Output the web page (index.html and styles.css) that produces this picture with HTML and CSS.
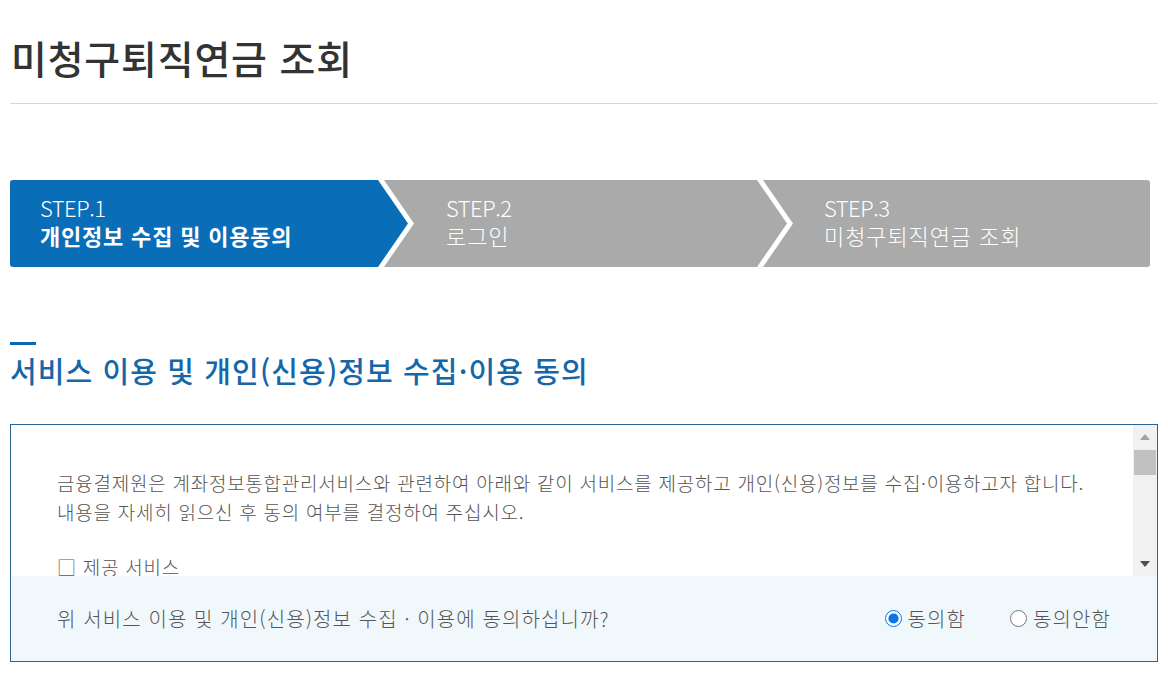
FILE: index.html
```html
<!DOCTYPE html>
<html lang="ko">
<head>
<meta charset="utf-8">
<title>미청구퇴직연금 조회</title>
<link rel="stylesheet" href="styles.css">
</head>
<body>
<div class="page">
  <h1 class="page-title">미청구퇴직연금 조회</h1>

  <ol class="steps">
    <li class="step step-1 is-active">
      <span class="step-text"><span class="step-no">STEP.1</span><strong class="step-name">개인정보 수집 및 이용동의</strong></span>
    </li>
    <li class="step step-2">
      <span class="step-text"><span class="step-no">STEP.2</span><span class="step-name">로그인</span></span>
    </li>
    <li class="step step-3">
      <span class="step-text"><span class="step-no">STEP.3</span><span class="step-name">미청구퇴직연금 조회</span></span>
    </li>
  </ol>

  <h2 class="section-title">서비스 이용 및 개인(신용)정보 수집·이용 동의</h2>

  <div class="terms-box">
    <div class="terms-scroll">
      <div class="terms-content">
        <p>금융결제원은 계좌정보통합관리서비스와 관련하여 아래와 같이 서비스를 제공하고 개인(신용)정보를 수집·이용하고자 합니다.<br>내용을 자세히 읽으신 후 동의 여부를 결정하여 주십시오.</p>
        <p>□ 제공 서비스</p>
        <p>- 미청구퇴직연금 조회 서비스</p>
        <p>□ 수집·이용 목적</p>
      </div>
      <div class="scrollbar" aria-hidden="true">
        <span class="sb-arrow sb-up"></span>
        <span class="sb-track"><span class="sb-thumb"></span></span>
        <span class="sb-arrow sb-down"></span>
      </div>
    </div>
    <div class="agree-row">
      <p class="agree-question">위 서비스 이용 및 개인(신용)정보 수집 · 이용에 동의하십니까?</p>
      <div class="agree-options">
        <label class="agree-option"><input type="radio" name="agree" checked> 동의함</label>
        <label class="agree-option"><input type="radio" name="agree"> 동의안함</label>
      </div>
    </div>
  </div>
</div>
</body>
</html>
```

FILE: styles.css
```css
* { box-sizing: border-box; }
html, body { margin: 0; padding: 0; background: #fff; }
body {
  font-family: "Noto Sans CJK KR", "Noto Sans", sans-serif;
  color: #333;
}
.page { padding: 0 10px; width: 1168px; }

.page-title {
  margin: 0;
  padding: 33px 0 22px 1px;
  font-size: 39px;
  line-height: 48px;
  letter-spacing: 0.8px;
  font-weight: 500;
  color: #333;
  border-bottom: 1px solid #d6d6d6;
}

/* steps */
.steps {
  list-style: none;
  margin: 76px 0 0;
  padding: 0;
  width: 1140px;
  height: 87px;
  display: flex;
  background: #aaaaaa;
  border-radius: 3px;
  overflow: hidden;
}
.step {
  position: relative;
  height: 100%;
  padding-top: 13px;
  color: #fff;
  font-size: 22px;
  line-height: 28px;
}
.step-text { position: relative; z-index: 1; display: flex; flex-direction: column; }
.step-no { font-weight: 300; letter-spacing: -0.5px; }
.step-name { font-weight: 300; letter-spacing: 0.9px; }
.step-1 .step-name { font-weight: 700; letter-spacing: 0.8px; }

.step-1 {
  width: 404px;
  padding-left: 30px;
  background: #fff;
  clip-path: polygon(0 0, 374px 0, 404px 50%, 374px 100%, 0 100%);
}
.step-1::before {
  content: "";
  position: absolute;
  inset: 0;
  background: #0a6db8;
  clip-path: polygon(0 0, 368px 0, 398px 50%, 368px 100%, 0 100%);
}
.step-2 {
  width: 379px;
  padding-left: 32px;
  background: #fff;
  clip-path: polygon(0 0, 349px 0, 379px 50%, 349px 100%, 0 100%);
}
.step-2::before {
  content: "";
  position: absolute;
  inset: 0;
  background: #aaaaaa;
  clip-path: polygon(0 0, 343px 0, 373px 50%, 343px 100%, 0 100%);
}
.step-3 {
  flex: 1;
  padding-left: 31px;
}

/* section title */
.section-title {
  margin: 75px 0 0;
  padding-top: 8px;
  position: relative;
  font-size: 29px;
  line-height: 40px;
  letter-spacing: 1.1px;
  font-weight: 500;
  color: #1567a9;
}
.section-title::before {
  content: "";
  position: absolute;
  left: 0;
  top: 0;
  width: 26px;
  height: 3px;
  background: #0c68b0;
}

/* terms box */
.terms-box {
  margin-top: 34px;
  border: 1px solid #2a6592;
}
.terms-scroll {
  display: flex;
  height: 151px;
}
.terms-content {
  flex: 1;
  overflow: hidden;
  padding: 43px 46px 0;
  font-size: 19px;
  line-height: 29px;
  letter-spacing: 0.75px;
  color: #555;
  font-weight: 300;
}
.terms-content p { margin: 0 0 26px; }

.scrollbar {
  width: 24px;
  background: #f1f1f1;
  display: flex;
  flex-direction: column;
  align-items: stretch;
}
.sb-arrow {
  height: 24px;
  display: flex;
  align-items: center;
  justify-content: center;
}
.sb-arrow::before {
  content: "";
  width: 0; height: 0;
  border-left: 5px solid transparent;
  border-right: 5px solid transparent;
}
.sb-up::before { border-bottom: 6px solid #a3a3a3; }
.sb-down::before { border-top: 6px solid #505050; }
.sb-track { flex: 1; padding: 1px 1px 0; }
.sb-thumb { display: block; height: 25px; background: #c1c1c1; }

.agree-row {
  display: flex;
  align-items: center;
  justify-content: space-between;
  height: 85px;
  background: #f1f8fc;
  padding: 0 46px;
  font-size: 20px;
  letter-spacing: 1.1px;
  font-weight: 300;
  color: #555;
}
.agree-question { margin: 0; }
.agree-options { display: flex; gap: 44px; }
.agree-option { display: flex; align-items: center; gap: 6px; }
.agree-option input {
  margin: 0;
  width: 17px;
  height: 17px;
  accent-color: #0b74e8;
}
```
